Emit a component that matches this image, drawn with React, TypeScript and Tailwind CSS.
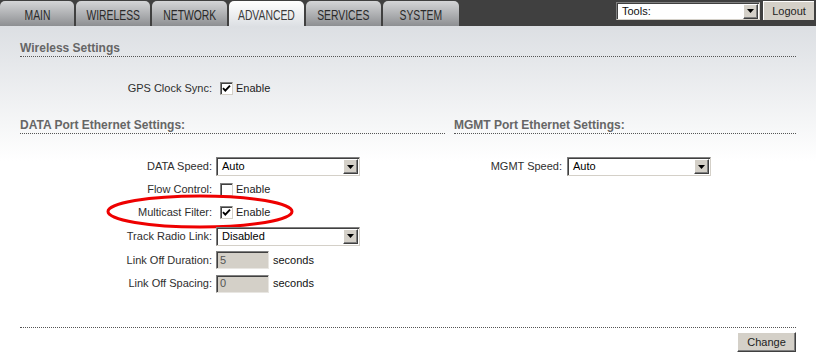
import React from "react";

const tabs = [
  { name: "MAIN", w: 74 },
  { name: "WIRELESS", w: 74 },
  { name: "NETWORK", w: 75 },
  { name: "ADVANCED", w: 75, active: true },
  { name: "SERVICES", w: 75 },
  { name: "SYSTEM", w: 76 },
];

function Arrow() {
  return (
    <span className="mr-[1px] flex h-[15px] w-[15px] items-center justify-center border border-t-white border-l-white border-b-[#404040] border-r-[#404040] bg-[#d4d0c8] shadow-[inset_-1px_-1px_0_#808080]">
      <svg width="7" height="4" viewBox="0 0 7 4">
        <path d="M0 0h7L3.5 4z" fill="#000" />
      </svg>
    </span>
  );
}

function Select({ value }: { value: string }) {
  return (
    <div className="flex h-[19px] w-[144px] items-center border border-t-[#808080] border-l-[#808080] border-r-[#d4d0c8] border-b-[#d4d0c8] bg-white shadow-[inset_1px_1px_0_#404040]">
      <span className="flex-1 pl-[5px] text-[11px] leading-none text-black">{value}</span>
      <Arrow />
    </div>
  );
}

function Check({ checked }: { checked: boolean }) {
  return (
    <span className="flex h-[13px] w-[13px] items-center justify-center border border-t-[#808080] border-l-[#808080] border-r-[#d4d0c8] border-b-[#d4d0c8] bg-white shadow-[inset_1px_1px_0_#404040]">
      {checked && (
        <svg width="9" height="9" viewBox="0 0 9 9">
          <path d="M1 4.2 L3.3 6.6 L8 1.6" fill="none" stroke="#000" strokeWidth="1.9" />
        </svg>
      )}
    </span>
  );
}

function TextBox({ value }: { value: string }) {
  return (
    <div className="flex h-[18px] w-[53px] items-center border border-t-[#808080] border-l-[#808080] border-r-[#e8e6e2] border-b-[#e8e6e2] bg-[#d4d0c8] shadow-[inset_1px_1px_0_#404040]">
      <span className="pl-[3px] text-[11px] leading-none text-[#555]">{value}</span>
    </div>
  );
}

function Row({
  label,
  h,
  labelW = 192,
  children,
  extra,
}: {
  label: string;
  h: number;
  labelW?: number;
  children: React.ReactNode;
  extra?: React.ReactNode;
}) {
  return (
    <div className="relative flex items-center" style={{ height: h }}>
      <div className="text-right text-[#2e2e2e]" style={{ width: labelW }}>
        {label}
      </div>
      <div className="flex items-center pl-[4px]">{children}</div>
      {extra}
    </div>
  );
}

function CheckEnable({ checked }: { checked: boolean }) {
  return (
    <>
      <span className="ml-[4px]">
        <Check checked={checked} />
      </span>
      <span className="ml-[3px] text-[#222]">Enable</span>
    </>
  );
}

function Heading({ children, className = "" }: { children: React.ReactNode; className?: string }) {
  return (
    <div
      className={
        "h-[15px] border-b border-dotted border-[#555] text-[12px] font-bold leading-[12px] text-[#666] " +
        className
      }
    >
      {children}
    </div>
  );
}

export default function App() {
  return (
    <div className="h-[361px] w-[816px] overflow-hidden bg-white font-['Liberation_Sans',Arial,sans-serif] text-[11px]">
      {/* top bar */}
      <div className="flex h-[26px] items-start bg-[#404040]">
        <div className="flex gap-[2px]">
          {tabs.map((t) => (
            <div
              key={t.name}
              className={
                "mt-[1px] flex h-[25px] items-center justify-center rounded-t-[5px] " +
                (t.active
                  ? "bg-[linear-gradient(to_bottom,#ffffff,#dde0e4)] text-[#3a3a3a]"
                  : "bg-[linear-gradient(to_bottom,#d4d5d7,#8d8f92)] text-[#2a2a2a]")
              }
              style={{ width: t.w }}
            >
              <span className="inline-block scale-x-[0.74] pt-[2px] text-[14px] leading-none">{t.name}</span>
            </div>
          ))}
        </div>
        <div className="ml-auto mr-[2px] mt-[2px] flex items-start gap-[3px]">
          <div className="flex h-[18px] w-[144px] items-center border border-t-[#808080] border-l-[#808080] border-r-[#d4d0c8] border-b-[#d4d0c8] bg-white shadow-[inset_1px_1px_0_#404040]">
            <span className="flex-1 pl-[5px] text-[11px] leading-none text-[#111]">Tools:</span>
            <Arrow />
          </div>
          <button className="-mt-[1px] h-[19px] w-[51px] border-l border-t border-l-white border-t-white bg-[#d4d0c8] text-[11px] leading-none text-[#222]">
            Logout
          </button>
        </div>
      </div>

      {/* content */}
      <div className="relative h-[335px] bg-[linear-gradient(to_bottom,#dcdfe3_0px,#ffffff_135px)] px-[20px] pt-[16px]">
        <Heading>Wireless Settings</Heading>
        <div className="mt-[20px]">
          <Row label="GPS Clock Sync:" h={23}>
            <CheckEnable checked />
          </Row>
        </div>

        <div className="mt-[19px] flex gap-[9px]">
          <div className="w-[425px]">
            <Heading>DATA Port Ethernet Settings:</Heading>
            <div className="mt-[21px]">
              <Row label="DATA Speed:" h={23}>
                <Select value="Auto" />
              </Row>
              <Row label="Flow Control:" h={23}>
                <CheckEnable checked={false} />
              </Row>
              <Row
                label="Multicast Filter:"
                h={23}
                extra={
                  <svg
                    className="pointer-events-none absolute left-[86px] top-[-7px]"
                    width="190"
                    height="36"
                    viewBox="0 0 190 36"
                  >
                    <ellipse cx="94" cy="17.5" rx="92" ry="15.5" fill="none" stroke="#ee0000" strokeWidth="3" />
                  </svg>
                }
              >
                <CheckEnable checked />
              </Row>
              <Row label="Track Radio Link:" h={24}>
                <Select value="Disabled" />
              </Row>
              <Row label="Link Off Duration:" h={24}>
                <TextBox value="5" />
                <span className="ml-[4px] text-[#111]">seconds</span>
              </Row>
              <Row label="Link Off Spacing:" h={23}>
                <TextBox value="0" />
                <span className="ml-[4px] text-[#111]">seconds</span>
              </Row>
            </div>
          </div>
          <div className="w-[342px]">
            <Heading>MGMT Port Ethernet Settings:</Heading>
            <div className="mt-[21px]">
              <Row label="MGMT Speed:" h={23} labelW={108}>
                <span className="ml-[1px]">
                  <Select value="Auto" />
                </span>
              </Row>
            </div>
          </div>
        </div>

        <div className="mt-[32px] border-t border-dotted border-[#555]">
          <div className="mt-[4px] flex justify-end">
            <button className="h-[20px] w-[59px] border border-t-white border-l-white border-b-[#404040] border-r-[#404040] bg-[#d4d0c8] text-[11px] leading-none text-[#222] shadow-[inset_-1px_-1px_0_#808080]">
              Change
            </button>
          </div>
        </div>
      </div>
    </div>
  );
}
